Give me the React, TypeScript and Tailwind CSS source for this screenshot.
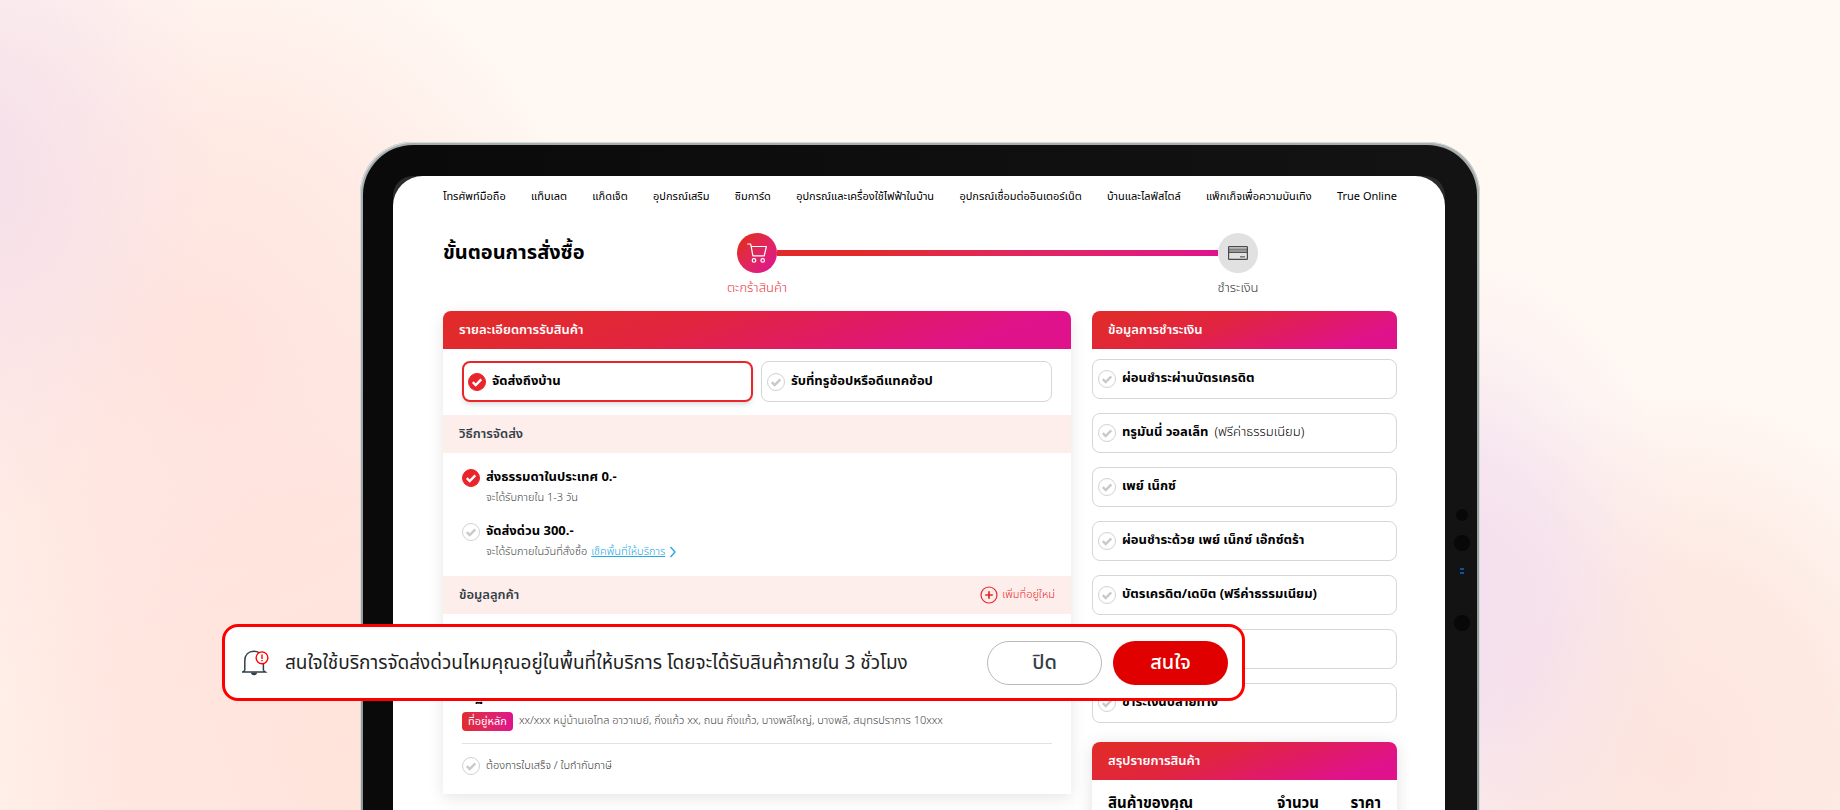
import type { ReactNode } from 'react';

const NAV_ITEMS = [
  'โทรศัพท์มือถือ',
  'แท็บเลต',
  'แก็ดเจ็ต',
  'อุปกรณ์เสริม',
  'ซิมการ์ด',
  'อุปกรณ์และเครื่องใช้ไฟฟ้าในบ้าน',
  'อุปกรณ์เชื่อมต่ออินเตอร์เน็ต',
  'บ้านและไลฟ์สไตล์',
  'แพ็กเก็จเพื่อความบันเทิง',
  'True Online',
];

type PaymentMethod = { id: string; label: string; note?: string };

const PAYMENT_METHODS: PaymentMethod[] = [
  { id: 'installment', label: 'ผ่อนชำระผ่านบัตรเครดิต' },
  { id: 'wallet', label: 'ทรูมันนี่ วอลเล็ท', note: '(ฟรีค่าธรรมเนียม)' },
  { id: 'paynext', label: 'เพย์ เน็กซ์' },
  { id: 'paynext-extra', label: 'ผ่อนชำระด้วย เพย์ เน็กซ์ เอ๊กซ์ตร้า' },
  { id: 'card', label: 'บัตรเครดิต/เดบิต (ฟรีค่าธรรมเนียม)' },
  { id: 'other', label: '' },
  { id: 'cod', label: 'ชำระเงินปลายทาง' },
];

type CheckInputProps = {
  type?: 'radio' | 'checkbox';
  name: string;
  defaultChecked?: boolean;
  ariaLabel?: string;
};

function CheckInput({ type = 'radio', name, defaultChecked, ariaLabel }: CheckInputProps) {
  return (
    <span className="grid size-[18px] shrink-0 place-items-center">
      <input
        type={type}
        name={name}
        defaultChecked={defaultChecked}
        aria-label={ariaLabel}
        className="peer col-start-1 row-start-1 size-[18px] appearance-none rounded-full border border-[#d2d2d2] bg-white checked:border-[#e9252b] checked:bg-[#e9252b]"
      />
      <svg
        viewBox="0 0 18 18"
        className="pointer-events-none col-start-1 row-start-1 size-[18px] text-[#c9c9c9] peer-checked:text-white"
        fill="none"
        stroke="currentColor"
        strokeWidth="2.4"
        aria-hidden="true"
      >
        <path d="M4.8 9.2 7.7 12l5.6-5.7" />
      </svg>
    </span>
  );
}

function CardHeader({ children }: { children: ReactNode }) {
  return (
    <h2 className="flex h-[38px] items-center rounded-t-lg bg-[linear-gradient(160deg,#e12b2b_10%,#e12440_40%,#e0128b_85%)] px-4 pt-0.5 text-[13px] font-semibold text-white">
      {children}
    </h2>
  );
}

function SectionBar({ title, children }: { title: string; children?: ReactNode }) {
  return (
    <div className="flex h-[38px] items-center justify-between bg-[#feeeeb] px-4">
      <h3 className="pt-0.5 text-[13px] font-semibold text-[#333f48]">{title}</h3>
      {children}
    </div>
  );
}

function CartIcon() {
  return (
    <svg viewBox="0 0 20 20" className="size-5" fill="none" stroke="white" strokeWidth="1.2" aria-hidden="true">
      <path d="M.6 1h3.1l2.2 11.8h11.3L19.4 3.5H4.2" strokeLinejoin="round" strokeLinecap="round" />
      <circle cx="7" cy="17.4" r="1.8" />
      <circle cx="15.7" cy="17.4" r="1.8" />
    </svg>
  );
}

function CardIcon() {
  return (
    <svg viewBox="0 0 20 14" className="h-3.5 w-5" fill="none" stroke="#4a4a4a" aria-hidden="true">
      <path d="M1 3.5h18v3H1z" fill="#969696" stroke="none" />
      <rect x=".6" y=".6" width="18.8" height="12.8" rx=".6" strokeWidth="1.2" />
      <path d="M1 3.1h18M1 6.5h18" strokeWidth=".9" />
      <path d="M12 10.8h5" strokeWidth="1.5" stroke="#777" />
    </svg>
  );
}

function BellIcon() {
  return (
    <svg viewBox="0 0 27 26" className="h-[26px] w-[27px] shrink-0" fill="none" aria-hidden="true">
      <path
        d="M2.8 20.6V10.8C2.8 4.8 6.5 1.2 12 1.2c2.1 0 3.6.5 5 1.4M21.4 14v6.6M2.8 20.6.7 22h22.6l-1.9-1.4"
        stroke="#333f48"
        strokeWidth="1.5"
      />
      <path d="M9 22.5h6c0 1.8-1.1 2.7-3 2.7s-3-.9-3-2.7z" fill="#333f48" />
      <circle cx="20" cy="7.8" r="5.9" fill="white" stroke="#f00" strokeWidth="1.4" />
      <path d="M20 4.4v4.500M20 10v1.300" stroke="#f00" strokeWidth="1.4" />
    </svg>
  );
}

function Stepper() {
  return (
    <ol className="flex w-[521px] items-start">
      <li className="flex w-10 flex-col items-center gap-[5px]">
        <span className="grid size-10 place-items-center rounded-full bg-linear-to-br from-[#e12b2b] from-20% to-[#e0128b] to-90%">
          <CartIcon />
        </span>
        <span className="text-[13px] leading-5 font-light whitespace-nowrap text-[#e9353b]">ตะกร้าสินค้า</span>
      </li>
      <li aria-hidden="true" className="mt-[17px] h-[6px] flex-1 bg-linear-to-r from-[#e12b2b] from-20% to-[#e0128b]" />
      <li className="flex w-10 flex-col items-center gap-[5px]">
        <span className="grid size-10 place-items-center rounded-full bg-[#e1e1e1]">
          <CardIcon />
        </span>
        <span className="text-[13px] leading-5 font-light whitespace-nowrap text-[#333]">ชำระเงิน</span>
      </li>
    </ol>
  );
}

function DeliveryCard() {
  return (
    <section className="min-w-0 flex-1 self-start rounded-t-lg bg-white shadow-[0_4px_16px_rgba(0,0,0,0.1)]">
      <CardHeader>รายละเอียดการรับสินค้า</CardHeader>

      <div className="grid grid-cols-2 gap-2 px-[19px] pt-3 pb-[13px]">
        <label className="flex h-[41px] items-center gap-1.5 rounded-lg border-2 border-[#e9252b] px-1 text-[13px] font-bold shadow-md shadow-black/10">
          <CheckInput name="delivery" defaultChecked />
          จัดส่งถึงบ้าน
        </label>
        <label className="flex h-[41px] items-center gap-1.5 rounded-lg border border-[#d6d6d6] px-[5px] text-[13px] font-bold">
          <CheckInput name="delivery" />
          รับที่ทรูช้อปหรือดีแทคช้อป
        </label>
      </div>

      <SectionBar title="วิธีการจัดส่ง" />
      <div className="flex flex-col gap-[14px] px-[19px] pt-[15px] pb-[14px]">
        <div>
          <label className="flex h-5 items-center gap-1.5 text-[13px] font-bold">
            <CheckInput name="shipping" defaultChecked />
            ส่งธรรมดาในประเทศ 0.-
          </label>
          <p className="pl-6 text-[11px] leading-5 font-light text-[#444]">จะได้รับภายใน 1-3 วัน</p>
        </div>
        <div>
          <label className="flex h-5 items-center gap-1.5 text-[13px] font-bold">
            <CheckInput name="shipping" />
            จัดส่งด่วน 300.-
          </label>
          <p className="flex items-center gap-1 pl-6 text-[11px] leading-5 font-light text-[#444]">
            จะได้รับภายในวันที่สั่งซื้อ
            <a href="#coverage" className="text-[#27a9e1] underline">
              เช็คพื้นที่ให้บริการ
            </a>
            <svg viewBox="0 0 8 12" className="h-3 w-2" fill="none" stroke="#27a9e1" strokeWidth="1.4" aria-hidden="true">
              <path d="m1.5 1 4.5 5-4.5 5" />
            </svg>
          </p>
        </div>
      </div>

      <SectionBar title="ข้อมูลลูกค้า">
        <button type="button" className="flex items-center gap-1 text-[11px] font-light text-[#e9252b]">
          <svg viewBox="0 0 18 18" className="size-[18px]" fill="none" stroke="currentColor" strokeWidth="1.2" aria-hidden="true">
            <circle cx="9" cy="9" r="8" />
            <path d="M9 5.2v7.6M5.2 9h7.6" strokeWidth="1.7" />
          </svg>
          เพิ่มที่อยู่ใหม่
        </button>
      </SectionBar>
      <div className="px-[19px] pt-[73px] pb-[18px]">
        <p className="text-sm leading-5 font-bold">ณัฐ</p>
        <p className="mt-[5px] flex h-[19px] items-center gap-1.5 text-[11px] font-light text-[#444]">
          <span className="rounded-sm bg-linear-to-r from-[#e12b2b] to-[#e0128b] px-1.5 leading-[19px] font-normal text-white">
            ที่อยู่หลัก
          </span>
          xx/xxx หมู่บ้านเอโทล อาวาเบย์, กิ่งแก้ว xx, ถนน กิ่งแก้ว, บางพลีใหญ่, บางพลี, สมุทรปราการ 10xxx
        </p>
        <hr className="my-3 border-[#e2e2e2]" />
        <label className="flex h-5 items-center gap-1.5 text-[11px] font-light text-[#333]">
          <CheckInput type="checkbox" name="tax-invoice" />
          ต้องการใบเสร็จ / ใบกำกับภาษี
        </label>
      </div>
    </section>
  );
}

function PaymentColumn() {
  return (
    <div className="w-[305px] shrink-0">
      <section>
        <CardHeader>ข้อมูลการชำระเงิน</CardHeader>
        <div className="mt-[10px] flex flex-col gap-[14px]">
          {PAYMENT_METHODS.map((method) => (
            <label
              key={method.id}
              className="flex h-10 items-center gap-1.5 rounded-lg border border-[#d6d6d6] px-[5px] text-[13px] font-bold"
            >
              <CheckInput name="payment" ariaLabel={method.label ? undefined : method.id} />
              {method.label}
              {method.note && <span className="font-light">{method.note}</span>}
            </label>
          ))}
        </div>
      </section>

      <section className="mt-[19px] rounded-t-lg bg-white shadow-[0_2px_16px_rgba(0,0,0,0.12)]">
        <CardHeader>สรุปรายการสินค้า</CardHeader>
        <table className="w-full text-[15px] leading-4 font-bold">
          <thead>
            <tr>
              <th className="pt-4 pb-6 pl-4 text-left">สินค้าของคุณ</th>
              <th className="w-[60px] pt-4 pb-6 text-left">จำนวน</th>
              <th className="w-[60px] pt-4 pr-4 pb-6 text-right">ราคา</th>
            </tr>
          </thead>
        </table>
      </section>
    </div>
  );
}

function ExpressOffer() {
  return (
    <div
      role="dialog"
      aria-label="จัดส่งด่วน"
      className="absolute top-[482px] right-[235px] -left-[138px] flex h-[77px] items-center rounded-2xl border-3 border-[#f00] bg-white pr-3.5 pl-[17px]"
    >
      <BellIcon />
      <p className="ml-4 flex-1 pt-1 text-[19px] whitespace-nowrap text-[#1f1f1f]">
        สนใจใช้บริการจัดส่งด่วนไหมคุณอยู่ในพื้นที่ให้บริการ โดยจะได้รับสินค้าภายใน 3 ชั่วโมง
      </p>
      <div className="flex gap-[11px]">
        <button type="button" className="h-11 w-[115px] rounded-full border border-[#b9b9b9] bg-white text-xl font-medium text-[#333f48]">
          ปิด
        </button>
        <button type="button" className="h-11 w-[115px] rounded-full bg-[#e10000] text-xl font-medium text-white">
          สนใจ
        </button>
      </div>
    </div>
  );
}

function Sensors() {
  return (
    <div className="absolute top-[367px] right-2.5 flex w-4 flex-col items-center" aria-hidden="true">
      <span className="size-3 rounded-full bg-[#080808]" />
      <span className="mt-3.5 size-4 rounded-full bg-[#080808]" />
      <span className="mt-4 grid size-2 place-items-center rounded-full bg-[#0a1420]">
        <span className="h-1.5 w-1 border-y-2 border-[#174f86]" />
      </span>
      <span className="mt-10 size-4 rounded-full bg-[#080808]" />
    </div>
  );
}

export default function App() {
  return (
    <main className="h-screen overflow-hidden bg-[#fff8f3] bg-[radial-gradient(ellipse_13%_44%_at_-1%_20%,#f5dfea_0%,#f5dfea99_40%,#f5dfea33_75%,#f5dfea00_100%),radial-gradient(ellipse_22%_52%_at_11%_42%,#ffe3dd_0%,#ffe3ddaa_50%,#ffe3dd00_100%),radial-gradient(ellipse_28%_60%_at_20%_92%,#ffe3db_0%,#ffe3dbcc_50%,#ffe3db00_100%),radial-gradient(ellipse_13%_42%_at_79%_73%,#f3deee_0%,#f3deeebb_40%,#f3deee33_75%,#f3deee00_100%),radial-gradient(ellipse_17%_46%_at_91%_94%,#fde5de_0%,#fde5decc_50%,#fde5de00_100%)] px-6 pt-[142px] font-['Noto_Sans_Thai','Noto_Sans',sans-serif] text-black">
      <div className="relative mx-auto max-w-[1120px] rounded-t-[52px] bg-linear-to-b from-[#a9aeae] to-[#8d9292] px-[3px] pt-[3px] shadow-[inset_1px_1px_0_#d5dada,inset_-1px_0_0_#d5dada]">
        <div className="rounded-t-[50px] bg-linear-to-r from-[#0a0a0a] to-[#131313] pt-[31px] pr-[32px] pl-[30px]">
          <div className="rounded-t-[20px] bg-[#2b2b2d]">
            <div className="rounded-t-[30px] bg-white pr-12 pb-24 pl-[50px]">
              <nav className="flex justify-between pt-[11px] text-[11px] leading-5 whitespace-nowrap">
                {NAV_ITEMS.map((item) => (
                  <a key={item} href="#shop">
                    {item}
                  </a>
                ))}
              </nav>

              <header className="mt-[26px] flex justify-between">
                <h1 className="pt-1 text-xl leading-8 font-bold">ขั้นตอนการสั่งซื้อ</h1>
                <div className="mr-[139px]">
                  <Stepper />
                </div>
              </header>

              <div className="mt-[13px] flex gap-[21px]">
                <DeliveryCard />
                <PaymentColumn />
              </div>
            </div>
          </div>
        </div>
        <Sensors />
        <ExpressOffer />
      </div>
    </main>
  );
}
